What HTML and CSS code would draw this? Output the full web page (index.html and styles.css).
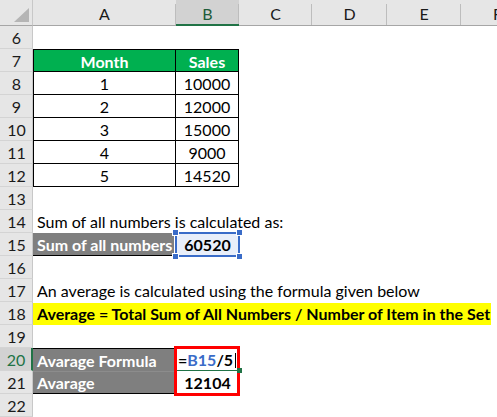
FILE: index.html
```html
<!DOCTYPE html>
<html>
<head>
<meta charset="utf-8">
<link rel="stylesheet" href="styles.css">
</head>
<body>
<div class="sheet">
  <div class="corner"><span class="tri"></span></div>
  <div class="ch">A</div>
  <div class="ch ch-sel">B</div>
  <div class="ch">C</div>
  <div class="ch">D</div>
  <div class="ch">E</div>
  <div class="ch">F</div>

  <div class="rh">6</div><div class="fill-all"></div>

  <div class="rh">7</div>
  <div class="tc th tl">Month</div>
  <div class="tc th">Sales</div>
  <div class="fill-rest"></div>

  <div class="rh">8</div><div class="tc tl">1</div><div class="tc">10000</div><div class="fill-rest"></div>
  <div class="rh">9</div><div class="tc tl">2</div><div class="tc">12000</div><div class="fill-rest"></div>
  <div class="rh">10</div><div class="tc tl">3</div><div class="tc">15000</div><div class="fill-rest"></div>
  <div class="rh">11</div><div class="tc tl">4</div><div class="tc">9000</div><div class="fill-rest"></div>
  <div class="rh">12</div><div class="tc tl">5</div><div class="tc">14520</div><div class="fill-rest"></div>

  <div class="rh">13</div><div class="fill-all"></div>

  <div class="rh">14</div><div class="text-row">Sum of all numbers is calculated as:</div>

  <div class="rh">15</div>
  <div class="grey-cell bottom-line">Sum of all numbers</div>
  <div class="val-cell ref-cell">60520<span class="refbox"><i class="h h-tl"></i><i class="h h-tr"></i><i class="h h-bl"></i><i class="h h-br"></i></span></div>
  <div class="fill-rest"></div>

  <div class="rh">16</div><div class="fill-all"></div>

  <div class="rh">17</div><div class="text-row">An average is calculated using the formula given below</div>

  <div class="rh">18</div><div class="text-row"><span class="yellow">Average = Total Sum of All Numbers / Number of Item in the Set</span></div>

  <div class="rh">19</div><div class="fill-all"></div>

  <div class="rh rh-sel">20</div>
  <div class="grey-cell top-line">Avarage Formula</div>
  <div class="edit-cell"><span class="eq">=</span><span class="ref">B15</span><span class="eq">/5</span><span class="caret"></span><span class="redbox"></span><span class="fillhandle"></span></div>
  <div class="fill-rest"></div>

  <div class="rh">21</div>
  <div class="grey-cell bottom-line sep">Avarage</div>
  <div class="val-cell">12104</div>
  <div class="fill-rest"></div>

  <div class="rh">22</div><div class="fill-all"></div>
</div>
</body>
</html>
```

FILE: styles.css
```css
* { box-sizing: border-box; }

body {
  margin: 0;
  width: 497px;
  height: 417px;
  overflow: hidden;
  background: #ffffff;
  font-family: Lato, "Liberation Sans", sans-serif;
  font-size: 16px;
  color: #000000;
}

.sheet {
  display: grid;
  grid-template-columns: 33px 143px 63px 73px 75px 74px 73px;
  grid-template-rows: 26px repeat(17, 23px);
  width: 534px;
}

.corner {
  background: #e6e6e6;
  border-bottom: 1px solid #a6a6a6;
  border-right: 1px solid #c8c8c8;
  position: relative;
}

.tri {
  position: absolute;
  right: 3px;
  bottom: 3px;
  width: 15px;
  height: 14px;
  background: #b5b5b5;
  clip-path: polygon(100% 0, 100% 100%, 0 100%);
}

.ch {
  background: #e6e6e6;
  border-bottom: 1px solid #a6a6a6;
  text-align: center;
  padding-top: 3px;
  line-height: 22px;
  position: relative;
  color: #1a1a1a;
}

.ch::after {
  content: "";
  position: absolute;
  right: 0;
  top: 4px;
  bottom: 0;
  width: 1px;
  background: #bdbdbd;
}

.ch-sel {
  background: #d2d2d2;
  border-bottom: 2px solid #217346;
  color: #1e5c3a;
}

.rh {
  background: #e6e6e6;
  border-right: 1px solid #c8c8c8;
  border-bottom: 1px solid #d4d4d4;
  text-align: center;
  line-height: 22px;
  padding-top: 1px;
  padding-left: 1px;
  color: #1a1a1a;
}

.rh-sel {
  background: #d2d2d2;
  border-right: 2px solid #217346;
  color: #217346;
}

.fill-all { grid-column: 2 / -1; }
.fill-rest { grid-column: 4 / -1; }

.tc {
  text-align: center;
  line-height: 22px;
  padding-top: 1px;
  border-right: 1px solid #000;
  border-bottom: 1px solid #000;
}

.tl { border-left: 1px solid #000; }

.th {
  background: #00b050;
  color: #ffffff;
  font-weight: 700;
  border-top: 1px solid #000;
  line-height: 21px;
}

.text-row {
  grid-column: 2 / -1;
  white-space: nowrap;
  line-height: 22px;
  padding-top: 1px;
  padding-left: 4px;
}

.yellow {
  display: block;
  width: 458px;
  margin-left: -4px;
  padding-left: 4px;
  background: #ffff00;
  font-weight: 700;
  height: 22px;
}

.grey-cell {
  background: #7f7f7f;
  color: #ffffff;
  font-weight: 700;
  padding-left: 4px;
  line-height: 22px;
  padding-top: 1px;
  margin-right: 2px;
  white-space: nowrap;
}

.bottom-line { border-bottom: 1px solid #000; line-height: 21px; }
.top-line { border-top: 1px solid #000; line-height: 21px; }
.sep { box-shadow: inset 0 1px 0 #8c8c8c; }

.val-cell {
  text-align: center;
  font-weight: 700;
  line-height: 22px;
  padding-top: 1px;
  position: relative;
}

.ref-cell { background: #e9effa; }

.refbox {
  position: absolute;
  left: -1px;
  top: -1px;
  right: -1px;
  bottom: -1px;
  border: 2px solid #3a6cc8;
}

.h {
  position: absolute;
  width: 5px;
  height: 5px;
  background: #3a6cc8;
  outline: 1px solid #ffffff;
}
.h-tl { left: -4px; top: -4px; }
.h-tr { right: -4px; top: -4px; }
.h-bl { left: -4px; bottom: -4px; }
.h-br { right: -4px; bottom: -4px; }

.edit-cell {
  position: relative;
  font-weight: 700;
  line-height: 22px;
  padding-top: 1px;
  padding-left: 2px;
  border-bottom: 1px solid #217346;
  white-space: nowrap;
}

.eq { color: #000; }
.ref { color: #3a6cc8; }

.caret {
  display: inline-block;
  width: 1px;
  height: 15px;
  background: #000;
  margin-left: 2px;
  vertical-align: -2px;
}

.redbox {
  position: absolute;
  left: -2px;
  top: -2px;
  width: 66px;
  height: 50px;
  border: 3px solid #ff0000;
}

.fillhandle {
  position: absolute;
  right: -3px;
  bottom: -3px;
  width: 5px;
  height: 5px;
  background: #217346;
}
```
